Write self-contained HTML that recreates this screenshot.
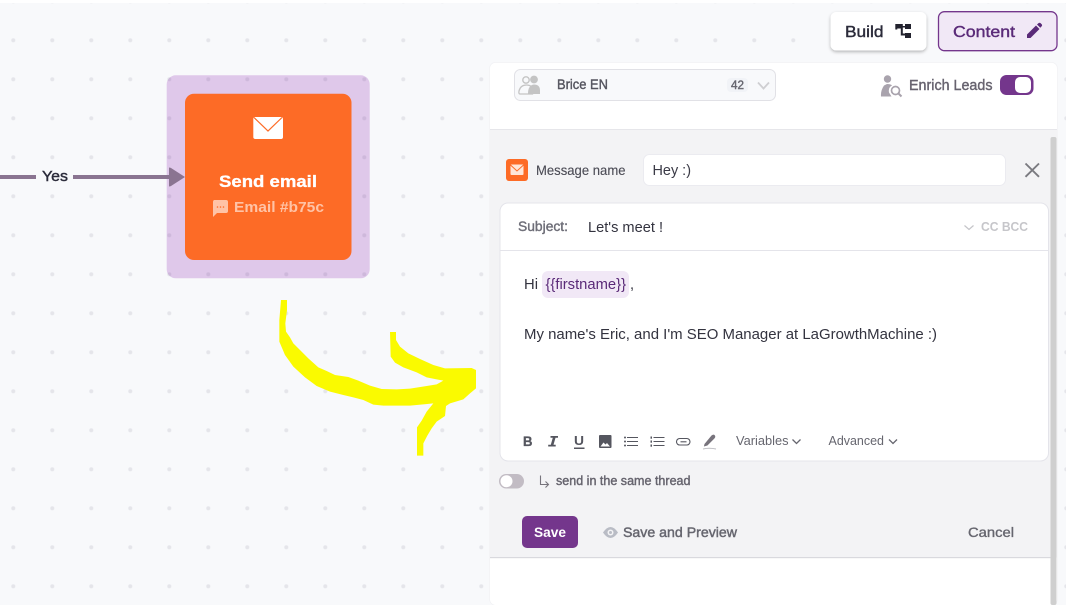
<!DOCTYPE html>
<html><head><meta charset="utf-8"><title>Send email</title>
<style>
html,body{margin:0;padding:0;width:1066px;height:605px;overflow:hidden;background:#f8f9fb}
svg{display:block}
text{font-family:"Liberation Sans",sans-serif;}
.m{stroke-width:.4px;}
</style></head><body>
<svg width="1066" height="605" viewBox="0 0 1066 605" xmlns="http://www.w3.org/2000/svg">
<defs>
<pattern id="d" x="13.3" y="1.3" width="39" height="39" patternUnits="userSpaceOnUse"><circle cx="0" cy="0" r="2" fill="#00002a" fill-opacity=".08"/><circle cx="39" cy="0" r="2" fill="#00002a" fill-opacity=".08"/><circle cx="0" cy="39" r="2" fill="#00002a" fill-opacity=".08"/><circle cx="39" cy="39" r="2" fill="#00002a" fill-opacity=".08"/></pattern>
<filter id="s" x="-20%" y="-30%" width="140%" height="170%"><feDropShadow dx="0" dy="1.5" stdDeviation="1.5" flood-color="#000" flood-opacity=".28"/></filter>
</defs>
<rect width="1066" height="605" fill="#f8f9fb"/>
<rect x="166.7" y="75.3" width="203" height="203" rx="9" fill="#dfc8ea"/>
<rect width="1066" height="605" fill="url(#d)"/>
<rect width="1066" height="3" fill="#fff"/>

<!-- edge -->
<rect x="0" y="175" width="36" height="4" fill="#8a7491"/>
<rect x="73" y="175" width="98" height="4" fill="#8a7491"/>
<path d="M169 168 Q169 167 171 168 L185 177 L171 186 Q169 187 169 186Z" fill="#8a7491"/>
<text x="42" y="181" font-size="15" fill="#2b2b3a" stroke="#2b2b3a" class="m" textLength="26" lengthAdjust="spacingAndGlyphs">Yes</text>

<!-- node -->
<rect x="185" y="93.7" width="166.5" height="166.3" rx="9" fill="#fd6b26"/>
<rect x="253.3" y="117" width="29.7" height="22" rx="2" fill="#fff"/>
<path d="M254 117.5 L268 131 L282 117.5" fill="none" stroke="#fd6b26" stroke-width="1.2"/>
<text x="219" y="187" font-size="17" font-weight="700" fill="#fff" stroke="#fff" stroke-width=".3" textLength="98" lengthAdjust="spacingAndGlyphs">Send email</text>
<path d="M214 200 h12 a2 2 0 0 1 2 2 v9 a2 2 0 0 1 -2 2 h-9 l-4 4 v-15 a2 2 0 0 1 1 -2z" fill="#ffc3a6"/>
<circle cx="217.5" cy="207" r=".8" fill="#fd6b26"/><circle cx="220.5" cy="207" r=".8" fill="#fd6b26"/><circle cx="223.5" cy="207" r=".8" fill="#fd6b26"/>
<text x="234" y="212" font-size="15" font-weight="700" fill="#ffc3a6" textLength="90" lengthAdjust="spacingAndGlyphs">Email #b75c</text>

<!-- yellow arrow -->
<svg x="270" y="290" width="220" height="170" viewBox="0 0 660 510">
<path fill="#fafa00" d="M33 30 L51 30 L51 60 L46 100 L48 125 L60 142 L70 160 L90 180 L115 205 L145 232 L170 243 L195 255 L235 261 L265 272 L300 287 L335 297 L380 298 L420 296 L470 288 L500 283 L520 272 L500 268 L470 262 L440 247 L400 232 L375 218 L362 200 L360 126 L378 126 L378 150 L390 170 L415 190 L450 207 L490 225 L525 235 L605 234 L618 240 L618 295 L600 310 L580 328 L540 340 L528 348 L525 378 L500 395 L485 415 L472 437 L460 460 L460 497 L441 497 L441 412 L455 392 L470 365 L490 340 L460 343 L420 347 L340 347 L310 344 L280 330 L250 322 L220 315 L180 305 L140 288 L105 262 L70 230 L45 195 L28 155 L28 90Z"/>
</svg>

<!-- top buttons -->
<rect x="830.5" y="12" width="96" height="38.5" rx="6" fill="#fff" filter="url(#s)"/>
<text x="845" y="37" font-size="16" fill="#2b2b3a" stroke="#2b2b3a" class="m" textLength="38.5" lengthAdjust="spacingAndGlyphs">Build</text>
<path d="M895.3 24h7.500v2h2.200v-2h6v5h-6v-1.500h-2.200v6h2.200v-.5h6v5h-6v-2.500h-4.200v-7h-3.500v1h-2z" fill="#22222e"/>
<rect x="938.5" y="11.7" width="118.5" height="39" rx="6" fill="#f1e8f6" stroke="#74368c" stroke-width="1.3"/>
<text x="953" y="37" font-size="16" fill="#5a2a78" stroke="#5a2a78" class="m" textLength="62" lengthAdjust="spacingAndGlyphs">Content</text>
<path d="M1027 38v-3.5l9-9 3.5 3.5-9 9zM1037 24.500l1.700-1.500q1-.6 1.700 0l1.400 1.400q.7.8 0 1.700l-1.500 1.600z" fill="#5a2a78"/>

<!-- panel -->
<rect x="490" y="62.7" width="567" height="542.3" rx="6" fill="#fff"/>
<rect x="489.600" y="62.300" width="567.800" height="543" rx="6" fill="none" stroke="#f0f0f3" stroke-width=".6"/>
<rect x="490" y="129.500" width="567" height="428" fill="#f3f3f5"/>
<rect x="490" y="129" width="567" height="1" fill="#e6e6ea"/>
<rect x="490" y="557" width="561" height="1.200" fill="#d9d9de"/>
<rect x="1050.500" y="137" width="6" height="468" rx="2" fill="#cfcfcf"/>

<!-- audience dropdown -->
<rect x="514.500" y="69.500" width="261" height="31" rx="6" fill="#f8f9fb" stroke="#e1e1e6"/>
<circle cx="526" cy="80" r="3.200" fill="none" stroke="#c4c4c4" stroke-width="1.400"/>
<circle cx="534" cy="79.500" r="3.900" fill="#c4c4c4"/>
<path d="M520 94 q-1.500 0 -1 -3 q1.500 -6 7.500 -6 q6 0 6 6 v3z" fill="#f8f9fb" stroke="#c4c4c4" stroke-width="1.300"/>
<path d="M528 94 q0 -4 1 -6 q2 -3.500 5 -3.500 q6 0 6 6 v3.500z" fill="#c4c4c4"/>
<text x="557" y="89" font-size="14" fill="#55555f" stroke="#55555f" class="m" textLength="51" lengthAdjust="spacingAndGlyphs">Brice EN</text>
<rect x="727" y="78" width="21" height="14" rx="4" fill="#f1f3f7"/>
<text x="731" y="89" font-size="11.500" fill="#66666f" stroke="#66666f" class="m" textLength="13" lengthAdjust="spacingAndGlyphs">42</text>
<path d="M758 82.500 L763.500 88.500 L769 82.500" fill="none" stroke="#cfcfd2" stroke-width="1.800"/>

<!-- enrich -->
<circle cx="887.500" cy="79" r="3.700" fill="#a9a3ad"/>
<path d="M881 96.500 q-.5 -6 3 -11 l3 -1.500 q4 0 5 1.500 q-4 2 -3 7 l2.500 4z" fill="#a9a3ad"/>
<circle cx="895.500" cy="90.500" r="4" fill="none" stroke="#a9a3ad" stroke-width="1.700"/>
<path d="M898.500 93.500 L901.500 96.500" stroke="#a9a3ad" stroke-width="2"/>
<text x="909" y="90" font-size="14.500" fill="#67636f" stroke="#67636f" class="m" textLength="83.500" lengthAdjust="spacingAndGlyphs">Enrich Leads</text>
<rect x="1000" y="75" width="33.500" height="20" rx="6.500" fill="#74368c"/>
<rect x="1015" y="77" width="16" height="16" rx="5" fill="#fff"/>

<!-- message name -->
<rect x="506" y="159" width="22" height="22" rx="3" fill="#fd6b26"/>
<rect x="510.500" y="164.500" width="13" height="10.500" rx="1" fill="#ffe6d8"/>
<path d="M510.500 165 L517 171 L523.500 165" fill="none" stroke="#fd6b26" stroke-width="1"/>
<text x="536" y="175" font-size="14" fill="#4b4b55" stroke="#4b4b55" stroke-width=".12" textLength="89.500" lengthAdjust="spacingAndGlyphs">Message name</text>
<rect x="643.500" y="154.500" width="362" height="31" rx="6" fill="#fff" stroke="#ebebf0"/>
<text x="652.500" y="175" font-size="14.500" fill="#3a3a46" textLength="38.500" lengthAdjust="spacingAndGlyphs">Hey :)</text>
<path d="M1025.500 163.500 L1039 176.800 M1039 163.500 L1025.500 176.800" stroke="#7a7a80" stroke-width="1.900"/>

<!-- editor card -->
<rect x="500" y="203" width="548.500" height="258" rx="8" fill="#fff" stroke="#e4e4ea"/>
<rect x="500" y="250" width="548.500" height="1" fill="#e4e4ea"/>
<text x="518" y="231" font-size="13.500" fill="#6e6e78" stroke="#6e6e78" class="m" textLength="50" lengthAdjust="spacingAndGlyphs">Subject:</text>
<text x="588" y="232" font-size="14.500" fill="#33333f" textLength="75" lengthAdjust="spacingAndGlyphs">Let's meet !</text>
<path d="M964.500 225.500 L969 229.500 L973.500 225.500" fill="none" stroke="#c4c4c8" stroke-width="1.200"/>
<text x="981" y="231" font-size="12.500" font-weight="700" fill="#c6c6ca" textLength="47" lengthAdjust="spacingAndGlyphs">CC BCC</text>
<text x="524" y="289" font-size="14.500" fill="#33333f" textLength="14" lengthAdjust="spacingAndGlyphs">Hi</text>
<rect x="542" y="271" width="87" height="27" rx="6" fill="#f1e8f6"/>
<text x="545.500" y="289" font-size="14.500" fill="#5a2a78" textLength="80.500" lengthAdjust="spacingAndGlyphs">{{firstname}}</text>
<text x="630" y="289" font-size="14.500" fill="#33333f">,</text>
<text x="524" y="339" font-size="14.500" fill="#33333f" textLength="413" lengthAdjust="spacingAndGlyphs">My name's Eric, and I'm SEO Manager at LaGrowthMachine :)</text>

<!-- toolbar -->
<text x="523" y="446" font-size="14" font-weight="700" fill="#55565f" stroke="#55565f" stroke-width=".3" textLength="9.500" lengthAdjust="spacingAndGlyphs">B</text>
<path d="M550.500 436 h7.500 v1.800 h-2.500 l-2 7 h2.200 v1.700 h-7.500 v-1.700 h2.600 l2 -7 h-2.300z" fill="#55565f"/>
<text x="574" y="445" font-size="12.500" font-weight="700" fill="#55565f" textLength="10" lengthAdjust="spacingAndGlyphs">U</text>
<rect x="574" y="447.500" width="10.500" height="1.500" fill="#55565f"/>
<rect x="599" y="435" width="12.500" height="13" rx="1" fill="#55565f"/>
<path d="M600.500 446.500 l3 -4 l2 2 l1.500 -1.500 l3 3.500z" fill="#fff"/>
<g stroke="#55565f" stroke-width="1.100" fill="none">
<path d="M627 437.500h11M627 441.500h11M627 445.500h11"/>
<path d="M653.500 437.500h11M653.500 441.500h11M653.500 445.500h11"/>
<rect x="676.500" y="438.500" width="13.500" height="6.500" rx="3.200"/>
<path d="M680.500 441.800h6"/>
</g>
<g fill="#55565f">
<circle cx="625" cy="437.500" r="1"/><circle cx="625" cy="441.500" r="1"/><circle cx="625" cy="445.500" r="1"/>
<rect x="650.500" y="436.500" width="1.500" height="2.200"/><rect x="650.500" y="440.500" width="1.500" height="2.200"/><rect x="650.500" y="444.500" width="1.500" height="2.200"/>
</g>
<path d="M704.500 444 l7 -8.500 q2 -1.500 3.200 -.3 q1.300 1.500 -.3 3.300 l-7 7 l-3.500 1z" fill="#77737c"/>
<path d="M703 449 q6 -1.500 13 0" stroke="#bdbdc2" stroke-width="1" fill="none"/>
<text x="736" y="445" font-size="12.500" fill="#66666f" textLength="52.500" lengthAdjust="spacingAndGlyphs">Variables</text>
<path d="M792.500 439.500 L796.500 443.500 L800.500 439.500" fill="none" stroke="#66666f" stroke-width="1.300"/>
<text x="828.500" y="445" font-size="12.500" fill="#66666f" textLength="55.500" lengthAdjust="spacingAndGlyphs">Advanced</text>
<path d="M889 439.500 L893 443.500 L897 439.500" fill="none" stroke="#66666f" stroke-width="1.300"/>

<!-- thread -->
<rect x="499" y="474" width="25" height="14.500" rx="7.200" fill="#c2bcc4"/>
<circle cx="506.500" cy="481.200" r="6" fill="#fff"/>
<path d="M540.500 475.500 v9 h8 M545.500 481.500 l3 3 l-3 3" fill="none" stroke="#77747c" stroke-width="1.100"/>
<text x="556" y="485" font-size="12.500" fill="#66646e" stroke="#66646e" stroke-width=".4" textLength="134.500" lengthAdjust="spacingAndGlyphs">send in the same thread</text>

<!-- actions -->
<rect x="522" y="516" width="56" height="32" rx="5" fill="#74368c"/>
<text x="534" y="537" font-size="14" font-weight="700" fill="#fff" textLength="32" lengthAdjust="spacingAndGlyphs">Save</text>
<path d="M603 532.500 q7.500 -11 15 0 q-7.500 11 -15 0z" fill="#b9bcc5"/>
<circle cx="610.500" cy="532.500" r="3" fill="#f3f3f5"/>
<circle cx="610.500" cy="532.500" r="1.500" fill="#b9bcc5"/>
<text x="623" y="537" font-size="14" fill="#66666f" stroke="#66666f" stroke-width=".45" textLength="114" lengthAdjust="spacingAndGlyphs">Save and Preview</text>
<text x="968" y="537" font-size="14" fill="#66666f" stroke="#66666f" stroke-width=".35" textLength="46" lengthAdjust="spacingAndGlyphs">Cancel</text>
</svg>
</body></html>
